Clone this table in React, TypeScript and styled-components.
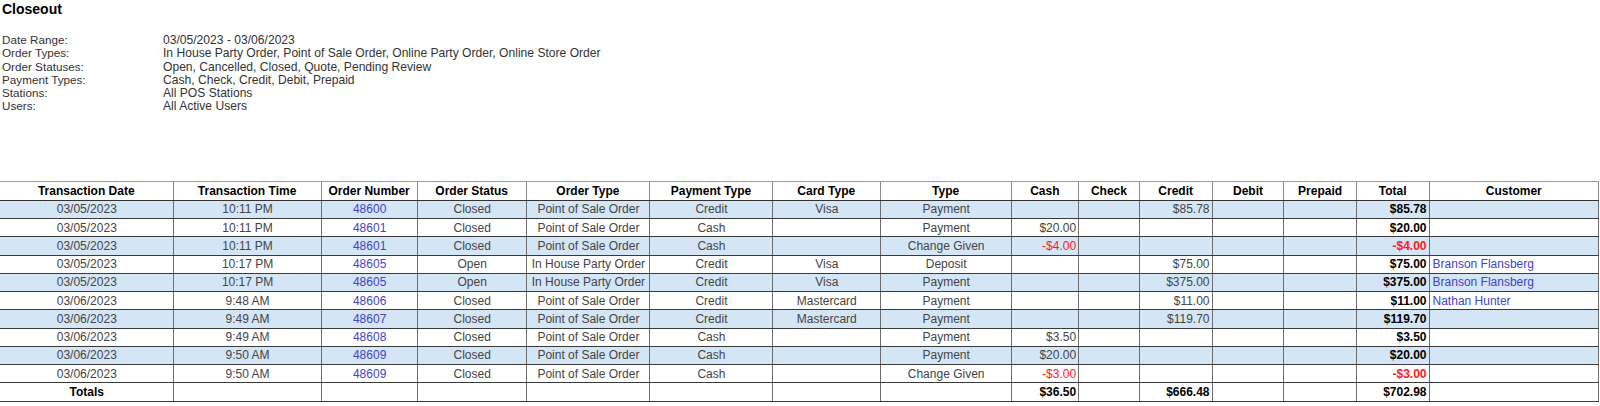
import styled, { createGlobalStyle } from "styled-components";

const GlobalStyle = createGlobalStyle`
  body {
    margin: 0;
    background: #ffffff;
    font-family: "Liberation Sans", Arial, sans-serif;
    color: #333333;
  }
`;

interface Row {
  date: string;
  time: string;
  order: string;
  status: string;
  orderType: string;
  paymentType: string;
  cardType?: string;
  type: string;
  cash?: string;
  credit?: string;
  total: string;
  customer?: string;
}

const filters: [string, string][] = [
  ["Date Range:", "03/05/2023 - 03/06/2023"],
  [
    "Order Types:",
    "In House Party Order, Point of Sale Order, Online Party Order, Online Store Order",
  ],
  ["Order Statuses:", "Open, Cancelled, Closed, Quote, Pending Review"],
  ["Payment Types:", "Cash, Check, Credit, Debit, Prepaid"],
  ["Stations:", "All POS Stations"],
  ["Users:", "All Active Users"],
];

const columns: { label: string; width: number }[] = [
  { label: "Transaction Date", width: 173 },
  { label: "Transaction Time", width: 148 },
  { label: "Order Number", width: 96 },
  { label: "Order Status", width: 109 },
  { label: "Order Type", width: 123.5 },
  { label: "Payment Type", width: 122.5 },
  { label: "Card Type", width: 108 },
  { label: "Type", width: 130.7 },
  { label: "Cash", width: 67.6 },
  { label: "Check", width: 60.7 },
  { label: "Credit", width: 72.7 },
  { label: "Debit", width: 71.9 },
  { label: "Prepaid", width: 72.4 },
  { label: "Total", width: 72.7 },
  { label: "Customer", width: 169.3 },
];

const rows: Row[] = [
  { date: "03/05/2023", time: "10:11 PM", order: "48600", status: "Closed", orderType: "Point of Sale Order", paymentType: "Credit", cardType: "Visa", type: "Payment", credit: "$85.78", total: "$85.78" },
  { date: "03/05/2023", time: "10:11 PM", order: "48601", status: "Closed", orderType: "Point of Sale Order", paymentType: "Cash", type: "Payment", cash: "$20.00", total: "$20.00" },
  { date: "03/05/2023", time: "10:11 PM", order: "48601", status: "Closed", orderType: "Point of Sale Order", paymentType: "Cash", type: "Change Given", cash: "-$4.00", total: "-$4.00" },
  { date: "03/05/2023", time: "10:17 PM", order: "48605", status: "Open", orderType: "In House Party Order", paymentType: "Credit", cardType: "Visa", type: "Deposit", credit: "$75.00", total: "$75.00", customer: "Branson Flansberg" },
  { date: "03/05/2023", time: "10:17 PM", order: "48605", status: "Open", orderType: "In House Party Order", paymentType: "Credit", cardType: "Visa", type: "Payment", credit: "$375.00", total: "$375.00", customer: "Branson Flansberg" },
  { date: "03/06/2023", time: "9:48 AM", order: "48606", status: "Closed", orderType: "Point of Sale Order", paymentType: "Credit", cardType: "Mastercard", type: "Payment", credit: "$11.00", total: "$11.00", customer: "Nathan Hunter" },
  { date: "03/06/2023", time: "9:49 AM", order: "48607", status: "Closed", orderType: "Point of Sale Order", paymentType: "Credit", cardType: "Mastercard", type: "Payment", credit: "$119.70", total: "$119.70" },
  { date: "03/06/2023", time: "9:49 AM", order: "48608", status: "Closed", orderType: "Point of Sale Order", paymentType: "Cash", type: "Payment", cash: "$3.50", total: "$3.50" },
  { date: "03/06/2023", time: "9:50 AM", order: "48609", status: "Closed", orderType: "Point of Sale Order", paymentType: "Cash", type: "Payment", cash: "$20.00", total: "$20.00" },
  { date: "03/06/2023", time: "9:50 AM", order: "48609", status: "Closed", orderType: "Point of Sale Order", paymentType: "Cash", type: "Change Given", cash: "-$3.00", total: "-$3.00" },
];

const isNegative = (v?: string) => !!v && v.startsWith("-");

export default function App() {
  return (
    <>
      <GlobalStyle />
      <Page>
        <Title>Closeout</Title>
        <FilterList>
          {filters.map(([label, value]) => (
            <FilterRow key={label}>
              <FilterLabel>{label}</FilterLabel>
              <FilterValue>{value}</FilterValue>
            </FilterRow>
          ))}
        </FilterList>
      </Page>
      <ReportTable>
        <colgroup>
          {columns.map((c) => (
            <col key={c.label} style={{ width: c.width }} />
          ))}
        </colgroup>
        <thead>
          <tr>
            {columns.map((c) => (
              <HeadCell key={c.label}>{c.label}</HeadCell>
            ))}
          </tr>
        </thead>
        <tbody>
          {rows.map((r, i) => (
            <BodyRow key={i} $shaded={i % 2 === 0}>
              <Cell>{r.date}</Cell>
              <Cell>{r.time}</Cell>
              <Cell>
                <OrderLink href="#">{r.order}</OrderLink>
              </Cell>
              <Cell>{r.status}</Cell>
              <Cell>{r.orderType}</Cell>
              <Cell>{r.paymentType}</Cell>
              <Cell>{r.cardType}</Cell>
              <Cell>{r.type}</Cell>
              <Cell $align="right" $negative={isNegative(r.cash)}>
                {r.cash}
              </Cell>
              <Cell $align="right" />
              <Cell $align="right">{r.credit}</Cell>
              <Cell $align="right" />
              <Cell $align="right" />
              <Cell $align="right" $bold $negative={isNegative(r.total)}>
                {r.total}
              </Cell>
              <Cell $align="left">
                {r.customer && <OrderLink href="#">{r.customer}</OrderLink>}
              </Cell>
            </BodyRow>
          ))}
          <BodyRow $shaded={false}>
            <Cell $bold>Totals</Cell>
            <Cell />
            <Cell />
            <Cell />
            <Cell />
            <Cell />
            <Cell />
            <Cell />
            <Cell $align="right" $bold>
              $36.50
            </Cell>
            <Cell />
            <Cell $align="right" $bold>
              $666.48
            </Cell>
            <Cell />
            <Cell />
            <Cell $align="right" $bold>
              $702.98
            </Cell>
            <Cell />
          </BodyRow>
        </tbody>
      </ReportTable>
    </>
  );
}

const Page = styled.div`
  padding: 1px 2px 0;
  height: 180px;
  box-sizing: border-box;
`;

const Title = styled.div`
  font-size: 14px;
  font-weight: bold;
  color: #000000;
  line-height: 16px;
`;

const FilterList = styled.div`
  margin-top: 16px;
  display: flex;
  flex-direction: column;
`;

const FilterRow = styled.div`
  display: grid;
  grid-template-columns: 161px 1fr;
  align-items: baseline;
  height: 13.26px;
  font-size: 11.7px;
  line-height: 13.26px;
  color: #333333;
`;

const FilterLabel = styled.span``;

const FilterValue = styled.span`
  font-size: 12.1px;
  line-height: 13.26px;
`;

const ReportTable = styled.table`
  border-collapse: collapse;
  table-layout: fixed;
  width: 1599px;
  margin-top: 0.5px;
  font-size: 12px;
`;

const HeadCell = styled.th`
  height: 18.25px;
  padding: 0 2px;
  font-weight: bold;
  color: #000000;
  text-align: center;
  white-space: nowrap;
  border-top: 1px solid #9a9a9a;
  border-bottom: 1px solid #333333;
  border-left: 1px solid #8a8a8a;
  border-right: 1px solid #8a8a8a;
  &:first-child {
    border-left: none;
  }
`;

const BodyRow = styled.tr<{ $shaded: boolean }>`
  background: ${({ $shaded }) => ($shaded ? "#d4e5f6" : "#ffffff")};
`;

const Cell = styled.td<{
  $align?: "left" | "center" | "right";
  $bold?: boolean;
  $negative?: boolean;
}>`
  height: 18.25px;
  padding: 0 2px 0 3px;
  box-sizing: border-box;
  text-align: ${({ $align }) => $align ?? "center"};
  white-space: nowrap;
  overflow: hidden;
  font-weight: ${({ $bold }) => ($bold ? "bold" : "normal")};
  color: ${({ $bold, $negative }) =>
    $negative ? "#ff1a1a" : $bold ? "#000000" : "#444444"};
  border-top: 1px solid #3a3a3a;
  border-bottom: 1px solid #3a3a3a;
  border-left: 1px solid #6e6e6e;
  border-right: 1px solid #6e6e6e;
  &:first-child {
    border-left: none;
  }
`;

const OrderLink = styled.a`
  color: #4343c6;
  text-decoration: none;
`;
